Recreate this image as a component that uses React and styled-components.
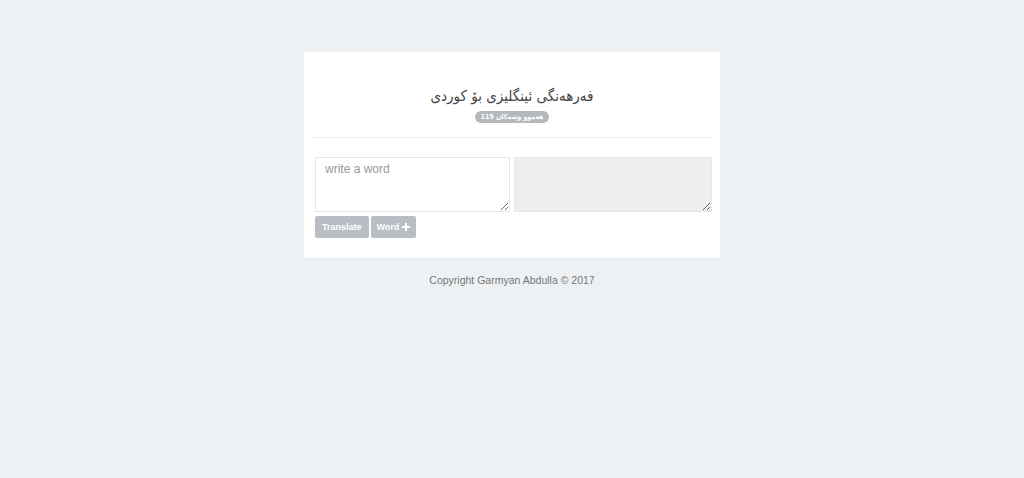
import React from "react";
import styled, { createGlobalStyle } from "styled-components";

const Global = createGlobalStyle`
  html, body { margin: 0; padding: 0; background: #edf1f4; }
  body { font-family: "Liberation Sans", Arial, sans-serif; }
  * { box-sizing: border-box; }
`;

const Page = styled.div`
  min-height: 478px;
  display: flex;
  flex-direction: column;
  align-items: center;
  padding-top: 52px;
`;

const Card = styled.div`
  width: 416px;
  height: 206px;
  background: #fff;
  box-shadow: 0 1px 2px rgba(0, 0, 0, 0.04);
  padding: 0 8px;
`;

const Header = styled.div`
  display: flex;
  flex-direction: column;
  align-items: center;
  padding-top: 33px;
  height: 86px;
  border-bottom: 1px solid #eeeeee;
`;

const Title = styled.h1`
  margin: 0;
  font-family: "DejaVu Sans Condensed", "DejaVu Sans", sans-serif;
  font-stretch: condensed;
  font-weight: normal;
  font-size: 15px;
  line-height: 22px;
  color: #444;
  direction: rtl;
`;

const Badge = styled.span`
  margin-top: 4px;
  display: inline-block;
  background: #b4b9be;
  color: #fff;
  font-family: "DejaVu Sans Condensed", "DejaVu Sans", sans-serif;
  font-stretch: condensed;
  font-weight: bold;
  font-size: 7px;
  line-height: 12px;
  height: 12px;
  padding: 0 6px;
  border-radius: 6px;
  direction: rtl;
`;

const Body = styled.div`
  padding: 19px 0 0 3px;
`;

const Row = styled.div`
  display: flex;
  gap: 4px;
`;

const Area = styled.textarea`
  flex: ${(p) => p.$grow};
  height: 55px;
  margin: 0;
  border: 1px solid #e6e6e6;
  background: ${(p) => (p.readOnly ? "#eeeeee" : "#fff")};
  padding: 4px 9px;
  font-family: "Liberation Sans", Arial, sans-serif;
  font-size: 12px;
  color: #555;
  outline: none;
  &::placeholder { color: #999; }
`;

const Buttons = styled.div`
  display: flex;
  gap: 2px;
  margin-top: 4px;
`;

const Button = styled.button`
  height: 22px;
  padding: 0 ${(p) => p.$px}px;
  border: none;
  border-radius: 2px;
  background: #b8bec4;
  color: #fff;
  font-family: "Liberation Sans", Arial, sans-serif;
  font-weight: bold;
  font-size: 9px;
  display: flex;
  align-items: center;
  gap: 3px;
`;

const Footer = styled.p`
  margin: 16px 0 0;
  font-size: 10.5px;
  color: #777;
`;

export default function App() {
  return (
    <>
      <Global />
      <Page>
        <Card>
          <Header>
            <Title>فەرهەنگی ئینگلیزی بۆ کوردی</Title>
            <Badge>هەموو وشەکان 119</Badge>
          </Header>
          <Body>
            <Row>
              <Area $grow="195 0 195px" placeholder="write a word" />
              <Area $grow="198 0 198px" readOnly />
            </Row>
            <Buttons>
              <Button $px={7}>Translate</Button>
              <Button $px={6}>
                Word
                <svg width="8" height="8" viewBox="0 0 8 8">
                  <path d="M3 0h2v3h3v2H5v3H3V5H0V3h3z" fill="#fff" />
                </svg>
              </Button>
            </Buttons>
          </Body>
        </Card>
        <Footer>Copyright Garmyan Abdulla © 2017</Footer>
      </Page>
    </>
  );
}
